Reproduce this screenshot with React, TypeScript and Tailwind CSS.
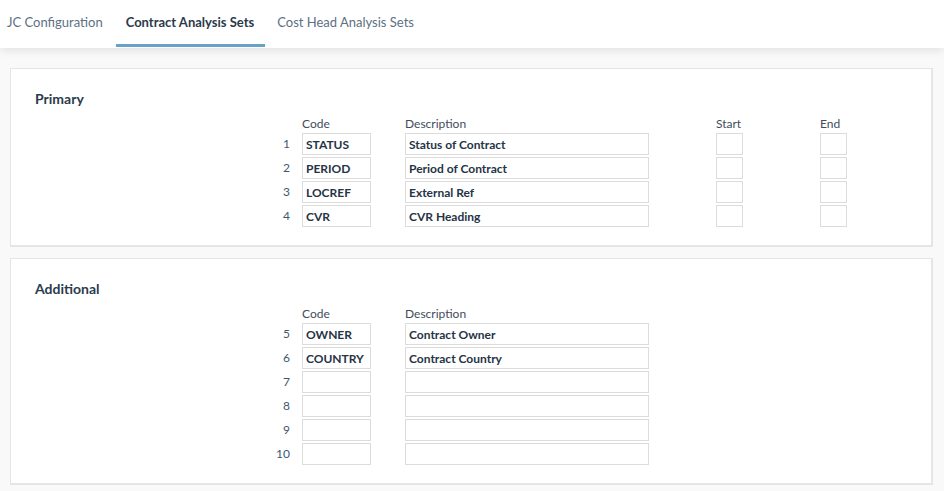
import React from 'react';

type Row = { n: number; code: string; desc: string };

const primaryRows: Row[] = [
  { n: 1, code: 'STATUS', desc: 'Status of Contract' },
  { n: 2, code: 'PERIOD', desc: 'Period of Contract' },
  { n: 3, code: 'LOCREF', desc: 'External Ref' },
  { n: 4, code: 'CVR', desc: 'CVR Heading' },
];

const additionalRows: Row[] = [
  { n: 5, code: 'OWNER', desc: 'Contract Owner' },
  { n: 6, code: 'COUNTRY', desc: 'Contract Country' },
  { n: 7, code: '', desc: '' },
  { n: 8, code: '', desc: '' },
  { n: 9, code: '', desc: '' },
  { n: 10, code: '', desc: '' },
];

const tabs = ['JC Configuration', 'Contract Analysis Sets', 'Cost Head Analysis Sets'];

const boxClass =
  'h-[22px] border border-[#dcdcdc] bg-white px-[3px] text-[12px] font-bold text-[#253445] outline-none';

const Panel: React.FC<{ title: string; rows: Row[]; withRange?: boolean }> = ({ title, rows, withRange }) => (
  <section className="bg-white border-t border-l border-r-2 border-b-2 border-[#e5e5e5] pl-[24px] pt-[20px] pb-[18px]">
    <h2 className="text-[14px] leading-[20px] font-bold text-[#2a3b4d]">{title}</h2>
    <div className="ml-[235px] mt-[7px]">
      <div className="flex h-[17px] text-[12px] leading-[16px] text-[#3f4d5c]">
        <span className="w-[20px]" />
        <span className="ml-[12px] w-[69px]">Code</span>
        <span className="ml-[34px] w-[244px]">Description</span>
        {withRange && (
          <>
            <span className="ml-[67px] w-[27px]">Start</span>
            <span className="ml-[77px] w-[27px]">End</span>
          </>
        )}
      </div>
      <div className="flex flex-col gap-[2px]">
        {rows.map((r) => (
          <div key={r.n} className="flex items-center">
            <span className="w-[20px] text-right text-[12px] text-[#3d5874]">{r.n}</span>
            <input readOnly value={r.code} className={`${boxClass} ml-[12px] w-[69px]`} />
            <input readOnly value={r.desc} className={`${boxClass} ml-[34px] w-[244px]`} />
            {withRange && (
              <>
                <input readOnly value="" className={`${boxClass} ml-[67px] w-[27px]`} />
                <input readOnly value="" className={`${boxClass} ml-[77px] w-[27px]`} />
              </>
            )}
          </div>
        ))}
      </div>
    </div>
  </section>
);

export default function App() {
  return (
    <div className="min-h-[491px] bg-[#f9f9f9]" style={{ fontFamily: 'Lato, "Open Sans", sans-serif' }}>
      <nav className="relative z-10 flex h-[48px] bg-white pl-[7px] shadow-[0_3px_8px_rgba(0,0,0,0.09)]">
        {tabs.map((t, i) => (
          <div
            key={t}
            className={`relative flex items-center pb-[2px] mr-[23px] text-[13px] ${
              i === 1 ? 'font-bold text-[#2b3a4a]' : 'text-[#5d7083]'
            }`}
          >
            {t}
            {i === 1 && <span className="absolute -left-[10px] -right-[11px] bottom-[1px] h-[3px] bg-[#67a3c6]" />}
          </div>
        ))}
      </nav>
      <main className="flex flex-col gap-[11px] pt-[20px] pl-[10px] pr-[11px] pb-[5px]">
        <Panel title="Primary" rows={primaryRows} withRange />
        <Panel title="Additional" rows={additionalRows} />
      </main>
    </div>
  );
}
